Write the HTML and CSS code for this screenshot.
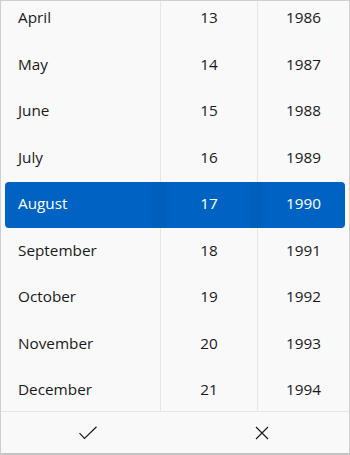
FILE: index.html
```html
<!DOCTYPE html>
<html>
<head>
<meta charset="utf-8">
<link rel="stylesheet" href="styles.css">
</head>
<body>
<div class="picker">
  <div class="columns">
    <div class="highlight"></div>
    <div class="col col-month">
      <div class="item">April</div>
      <div class="item">May</div>
      <div class="item">June</div>
      <div class="item">July</div>
      <div class="item selected">August</div>
      <div class="item">September</div>
      <div class="item">October</div>
      <div class="item">November</div>
      <div class="item">December</div>
    </div>
    <div class="col col-day">
      <div class="item">13</div>
      <div class="item">14</div>
      <div class="item">15</div>
      <div class="item">16</div>
      <div class="item selected">17</div>
      <div class="item">18</div>
      <div class="item">19</div>
      <div class="item">20</div>
      <div class="item">21</div>
    </div>
    <div class="col col-year">
      <div class="item">1986</div>
      <div class="item">1987</div>
      <div class="item">1988</div>
      <div class="item">1989</div>
      <div class="item selected">1990</div>
      <div class="item">1991</div>
      <div class="item">1992</div>
      <div class="item">1993</div>
      <div class="item">1994</div>
    </div>
  </div>
  <div class="footer">
    <button class="btn" aria-label="Accept">
      <svg width="20" height="14" viewBox="0 0 20 14"><path d="M1.5 7.2 L6.5 12.5 L18.5 0.8" fill="none" stroke="#1b1b1b" stroke-width="1.2"/></svg>
    </button>
    <button class="btn" aria-label="Dismiss">
      <svg width="14" height="14" viewBox="0 0 14 14"><path d="M1 1 L13 13 M13 1 L1 13" fill="none" stroke="#1b1b1b" stroke-width="1.2"/></svg>
    </button>
  </div>
</div>
</body>
</html>
```

FILE: styles.css
```css
html, body {
  margin: 0;
  padding: 0;
  background: #f9f9f9;
}

.picker {
  width: 350px;
  height: 455px;
  box-sizing: border-box;
  border: 1px solid #cfcfcf;
  border-bottom: 2px solid #c4c4c4;
  background: #f9f9f9;
  display: flex;
  flex-direction: column;
  font-family: "Open Sans", "Noto Sans", sans-serif;
  font-size: 15.3px;
  color: #1a1a1a;
}

.columns {
  position: relative;
  height: 410px;
  display: flex;
  overflow: hidden;
  border-bottom: 1px solid #e5e5e5;
}

.highlight {
  position: absolute;
  left: 4px;
  right: 4px;
  top: 181px;
  height: 46px;
  border-radius: 4px;
  background:
    linear-gradient(to right,
      transparent 147px, rgba(0,0,0,0.04) 147px, rgba(0,0,0,0.04) 162px, transparent 162px,
      transparent 245px, rgba(0,0,0,0.04) 245px, rgba(0,0,0,0.04) 258px, transparent 258px),
    #0063c3;
  z-index: 1;
}

.col {
  display: flex;
  flex-direction: column;
  margin-top: -7px;
}

.col-month {
  width: 159px;
  padding-left: 17px;
  box-sizing: border-box;
}

.col-day {
  width: 96px;
  border-left: 1px solid #e6e6e6;
  align-items: center;
}

.col-year {
  flex: 1;
  border-left: 1px solid #e6e6e6;
  align-items: center;
}

.item {
  position: relative;
  z-index: 2;
  height: 46.5px;
  display: flex;
  align-items: center;
  flex-shrink: 0;
}

.item.selected {
  color: #ffffff;
}

.footer {
  flex: 1;
  display: flex;
}

.btn {
  flex: 1;
  border: none;
  background: transparent;
  padding: 0;
  margin: 0;
  display: flex;
  align-items: center;
  justify-content: center;
}
```
